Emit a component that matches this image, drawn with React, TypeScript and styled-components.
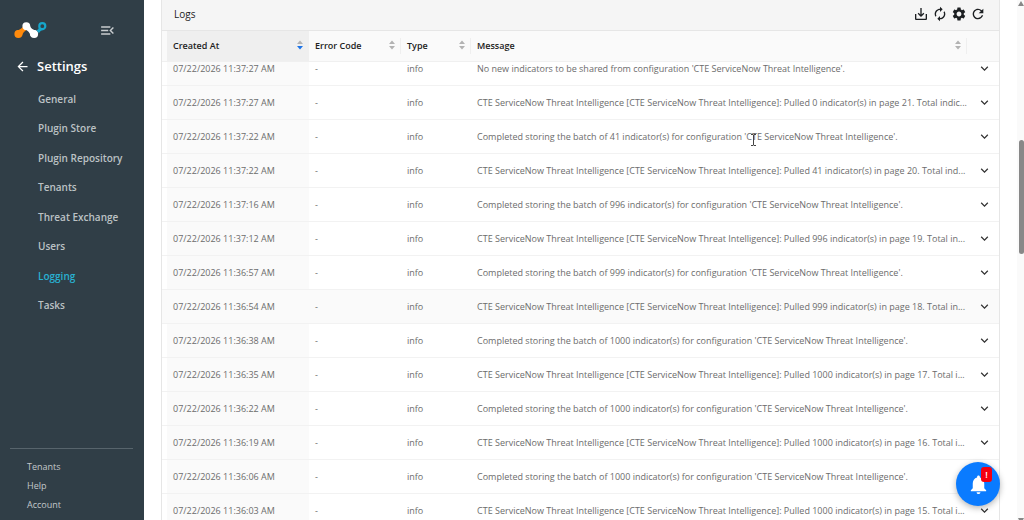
import { useLayoutEffect, useRef } from "react";
import styled, { createGlobalStyle, css } from "styled-components";
import {
  MdArrowBack,
  MdAutorenew,
  MdKeyboardArrowDown,
  MdMenuOpen,
  MdNotifications,
  MdRefresh,
  MdSaveAlt,
  MdSettings,
} from "react-icons/md";

const GlobalStyle = createGlobalStyle`
  * { box-sizing: border-box; }
  html, body, #root { height: 100%; }
  body {
    margin: 0;
    background: #fff;
    color: #222;
    font-family: "Open Sans", "Noto Sans", sans-serif;
    font-size: 9px;
  }
  button { padding: 0; border: 0; background: none; color: inherit; font: inherit; cursor: pointer; }
  a { color: inherit; text-decoration: none; }
`;

const Page = styled.div`
  display: flex;
  height: 100vh;
  overflow: hidden;
`;

const Sidebar = styled.aside`
  display: flex;
  flex: 0 0 144px;
  flex-direction: column;
  background: #303e47;
  color: #c3c8cb;
`;

const Brand = styled.div`
  display: flex;
  align-items: center;
  justify-content: space-between;
  height: 20px;
  margin: 20px 28px 0 14px;
`;

const CollapseButton = styled.button`
  display: flex;
  color: #c9cdd0;
`;

const SectionTitle = styled.h1`
  display: flex;
  align-items: center;
  gap: 7px;
  height: 20px;
  margin: 16px 0 13px 15px;
  color: #fff;
  font-size: 13px;
  font-weight: 600;
`;

const BackButton = styled.button`
  display: flex;
`;

const Nav = styled.nav`
  display: flex;
  flex-direction: column;
  justify-content: space-between;
  min-height: 226px;
`;

const NavLink = styled.a<{ $active?: boolean }>`
  padding-left: 38px;
  color: ${(p) => (p.$active ? "#28b1d2" : "#bcc2c5")};
  font-size: 10px;
  font-weight: 600;
  line-height: 20px;
  white-space: nowrap;
`;

const SidebarFooter = styled.nav`
  margin: auto 11px 6px 10px;
  padding-top: 8px;
  border-top: 1px solid #57646c;
`;

const FooterLink = styled.a`
  display: block;
  padding-left: 17px;
  color: #c3c8cb;
  line-height: 19px;
`;

const Main = styled.main`
  display: flex;
  flex: 1;
  min-width: 0;
  padding: 0 17px;
`;

const Card = styled.section`
  display: flex;
  flex: 1;
  flex-direction: column;
  min-width: 0;
  border: solid #e6e6e6;
  border-width: 0 1px;
`;

const CardHeader = styled.header`
  display: flex;
  flex: none;
  align-items: center;
  justify-content: space-between;
  height: 31px;
  padding: 0 13px 2px 12px;
  border-bottom: 1px solid #e6e6e6;
  background: #f5f5f5;
`;

const CardTitle = styled.h2`
  margin: 0;
  font-size: 10px;
  font-weight: 500;
`;

const Toolbar = styled.div`
  display: flex;
  gap: 3px;
`;

const ToolButton = styled.button`
  display: flex;
  color: #1c1f22;
`;

const TableScroll = styled.div`
  flex: 1;
  overflow-y: scroll;
  scrollbar-width: none;
`;

const Table = styled.table`
  width: 100%;
  border-spacing: 0;
  table-layout: fixed;
`;

const Col = styled.col<{ $width?: number }>`
  ${(p) => p.$width && css`width: ${p.$width}px;`}
`;

const HeadCell = styled.th<{ $sorted?: boolean; $divided?: boolean }>`
  position: sticky;
  top: 0;
  height: 31px;
  padding: 0 6px 2px;
  border-bottom: 1px solid #f0f0f0;
  background: ${(p) => (p.$sorted ? "#efefef" : "#fafafa")};
  ${(p) =>
    p.$divided &&
    css`
      background: linear-gradient(#efefef, #efefef) right center / 1px 16px no-repeat #fafafa;
    `}
  font-weight: 600;
  text-align: left;
`;

const HeadButton = styled.button`
  display: flex;
  align-items: center;
  justify-content: space-between;
  width: 100%;
  font-weight: 600;
`;

const Cell = styled.td<{ $sorted?: boolean }>`
  height: 34px;
  padding: 0 6px;
  overflow: hidden;
  border-bottom: 1px solid #f2f2f2;
  background: ${(p) => (p.$sorted ? "#fafafa" : "transparent")};
  color: #6c6c6c;
  white-space: nowrap;
`;

const MessageCell = styled(Cell)`
  padding-right: 0;
`;

const Row = styled.tr<{ $hovered?: boolean }>`
  ${(p) => p.$hovered && css`background: #fafafa;`}
`;

const ExpandButton = styled.button`
  display: flex;
  margin-left: 4px;
  color: #333;
`;

const ScrollTrack = styled.div`
  display: flex;
  flex: 0 0 7px;
  flex-direction: column;
  align-items: flex-end;
  background: #fafafa;
`;

const ScrollThumb = styled.div`
  width: 5px;
  height: 22%;
  margin: 133px 0 auto;
  border-radius: 3px;
  background: #888;
`;

const AlertButton = styled.button`
  position: fixed;
  right: 24px;
  bottom: 14px;
  z-index: 2;
  display: flex;
  align-items: center;
  justify-content: center;
  width: 44px;
  height: 44px;
  border-radius: 50%;
  background: #0a7bff;
  box-shadow: 0 2px 6px rgba(0, 0, 0, 0.3);
  color: #fff;
`;

const AlertBadge = styled.span`
  position: absolute;
  top: 5px;
  right: 8px;
  width: 11px;
  border-radius: 3px;
  background: #f5000f;
  font-size: 9px;
  font-weight: 600;
  line-height: 15px;
  text-align: center;
`;

const Pointer = styled.svg`
  position: fixed;
  top: 134px;
  left: 750px;
  pointer-events: none;
`;

function Logo() {
  return (
    <svg width="33" height="18" viewBox="0 0 33 18" role="img" aria-label="Netskope">
      <path d="M2.5 9.5C5.8 8.8 7.5 7.6 9.2 5.4l3.2 3.5C10 10.5 8.7 12 8 15z" fill="#ff8a0c" />
      <circle cx="4.4" cy="13.1" r="4" fill="#ff8a0c" />
      <path d="M15.8 3.2c.4 3.4 2.2 5.3 6.2 6.3l-5.6 5.4c-.5-3.6-2.4-5.5-6.2-6.4z" fill="#fff" />
      <circle cx="12.3" cy="5.1" r="3.9" fill="#fff" />
      <circle cx="20.1" cy="13.1" r="4" fill="#fff" />
      <path d="M25.1 6.2c-.4 1.8-1.3 2.6-3 3.1 1.5.8 2.3 1.8 2.8 3.3.8-2.2 1.9-3.3 4-3.7z" fill="#16a6cb" />
      <circle cx="28.3" cy="5.2" r="3" fill="none" stroke="#16a6cb" strokeWidth="2.2" />
    </svg>
  );
}

function SortIcon({ descending }: { descending?: boolean }) {
  return (
    <svg width="6" height="10" viewBox="0 0 6 10" aria-hidden="true">
      <path d="M3 0.5 6 4H0z" fill="#b3b3b3" />
      <path d="M3 9.5 6 6H0z" fill={descending ? "#1b73e8" : "#b3b3b3"} />
    </svg>
  );
}

const navItems = [
  "General",
  "Plugin Store",
  "Plugin Repository",
  "Tenants",
  "Threat Exchange",
  "Users",
  "Logging",
  "Tasks",
];

const tools = [
  { label: "Export", Icon: MdSaveAlt },
  { label: "Auto refresh", Icon: MdAutorenew },
  { label: "Configure", Icon: MdSettings },
  { label: "Reload", Icon: MdRefresh },
];

const columns = ["Created At", "Error Code", "Type", "Message"];

const source = "CTE ServiceNow Threat Intelligence";
const stored = (count: number) =>
  `Completed storing the batch of ${count} indicator(s) for configuration '${source}'.`;
const pulled = (count: number, page: number, rest: string) =>
  `${source} [${source}]: Pulled ${count} indicator(s) in page ${page}. Total ${rest}...`;

const logs = [
  { time: "11:37:27", message: `No new indicators to be shared from configuration '${source}'.` },
  { time: "11:37:27", message: pulled(0, 21, "indic") },
  { time: "11:37:22", message: stored(41) },
  { time: "11:37:22", message: pulled(41, 20, "ind") },
  { time: "11:37:16", message: stored(996) },
  { time: "11:37:12", message: pulled(996, 19, "in") },
  { time: "11:36:57", message: stored(999) },
  { time: "11:36:54", message: pulled(999, 18, "in"), hovered: true },
  { time: "11:36:38", message: stored(1000) },
  { time: "11:36:35", message: pulled(1000, 17, "i") },
  { time: "11:36:22", message: stored(1000) },
  { time: "11:36:19", message: pulled(1000, 16, "i") },
  { time: "11:36:06", message: stored(1000) },
  { time: "11:36:03", message: pulled(1000, 15, "i") },
];

export default function App() {
  const scroller = useRef<HTMLDivElement>(null);

  // Open the list slightly scrolled, under its sticky header.
  useLayoutEffect(() => {
    if (scroller.current) scroller.current.scrollTop = 10;
  }, []);

  return (
    <>
      <GlobalStyle />
      <Page>
        <Sidebar>
          <Brand>
            <Logo />
            <CollapseButton aria-label="Collapse menu">
              <MdMenuOpen size={17} />
            </CollapseButton>
          </Brand>
          <SectionTitle>
            <BackButton aria-label="Back">
              <MdArrowBack size={15} />
            </BackButton>
            Settings
          </SectionTitle>
          <Nav>
            {navItems.map((item) => (
              <NavLink key={item} href="#" $active={item === "Logging"}>
                {item}
              </NavLink>
            ))}
          </Nav>
          <SidebarFooter>
            {["Tenants", "Help", "Account"].map((item) => (
              <FooterLink key={item} href="#">
                {item}
              </FooterLink>
            ))}
          </SidebarFooter>
        </Sidebar>
        <Main>
          <Card>
            <CardHeader>
              <CardTitle>Logs</CardTitle>
              <Toolbar>
                {tools.map(({ label, Icon }) => (
                  <ToolButton key={label} aria-label={label}>
                    <Icon size={16} />
                  </ToolButton>
                ))}
              </Toolbar>
            </CardHeader>
            <TableScroll ref={scroller}>
              <Table>
                <colgroup>
                  <Col $width={5} />
                  <Col $width={142} />
                  <Col $width={92} />
                  <Col $width={70} />
                  <Col />
                  <Col $width={32} />
                </colgroup>
                <thead>
                  <tr>
                    <HeadCell />
                    {columns.map((name, i) => (
                      <HeadCell key={name} $sorted={i === 0} $divided={i > 0}>
                        <HeadButton>
                          {name}
                          <SortIcon descending={i === 0} />
                        </HeadButton>
                      </HeadCell>
                    ))}
                    <HeadCell />
                  </tr>
                </thead>
                <tbody>
                  {logs.map(({ time, message, hovered }) => (
                    <Row key={time + message} $hovered={hovered}>
                      <Cell />
                      <Cell $sorted>07/22/2026 {time} AM</Cell>
                      <Cell>-</Cell>
                      <Cell>info</Cell>
                      <MessageCell>{message}</MessageCell>
                      <Cell>
                        <ExpandButton aria-label="Show details">
                          <MdKeyboardArrowDown size={15} />
                        </ExpandButton>
                      </Cell>
                    </Row>
                  ))}
                </tbody>
              </Table>
            </TableScroll>
          </Card>
        </Main>
        <ScrollTrack>
          <svg width="7" height="7" viewBox="0 0 7 7" aria-hidden="true">
            <path d="M4 1 7 6H1z" fill="#888" />
          </svg>
          <ScrollThumb />
          <svg width="7" height="2" viewBox="0 0 7 2" aria-hidden="true">
            <path d="M1 0h6L6 2H2z" fill="#888" />
          </svg>
        </ScrollTrack>
      </Page>
      <AlertButton aria-label="Notifications">
        <MdNotifications size={23} />
        <AlertBadge>!</AlertBadge>
      </AlertButton>
      <Pointer width="7" height="12" viewBox="0 0 7 12" aria-hidden="true">
        <path d="M1 .5h2l.5.5.5-.5h2M3.5 1v10M1 11.5h2l.5-.5.5.5h2" fill="none" stroke="#444" />
      </Pointer>
    </>
  );
}
